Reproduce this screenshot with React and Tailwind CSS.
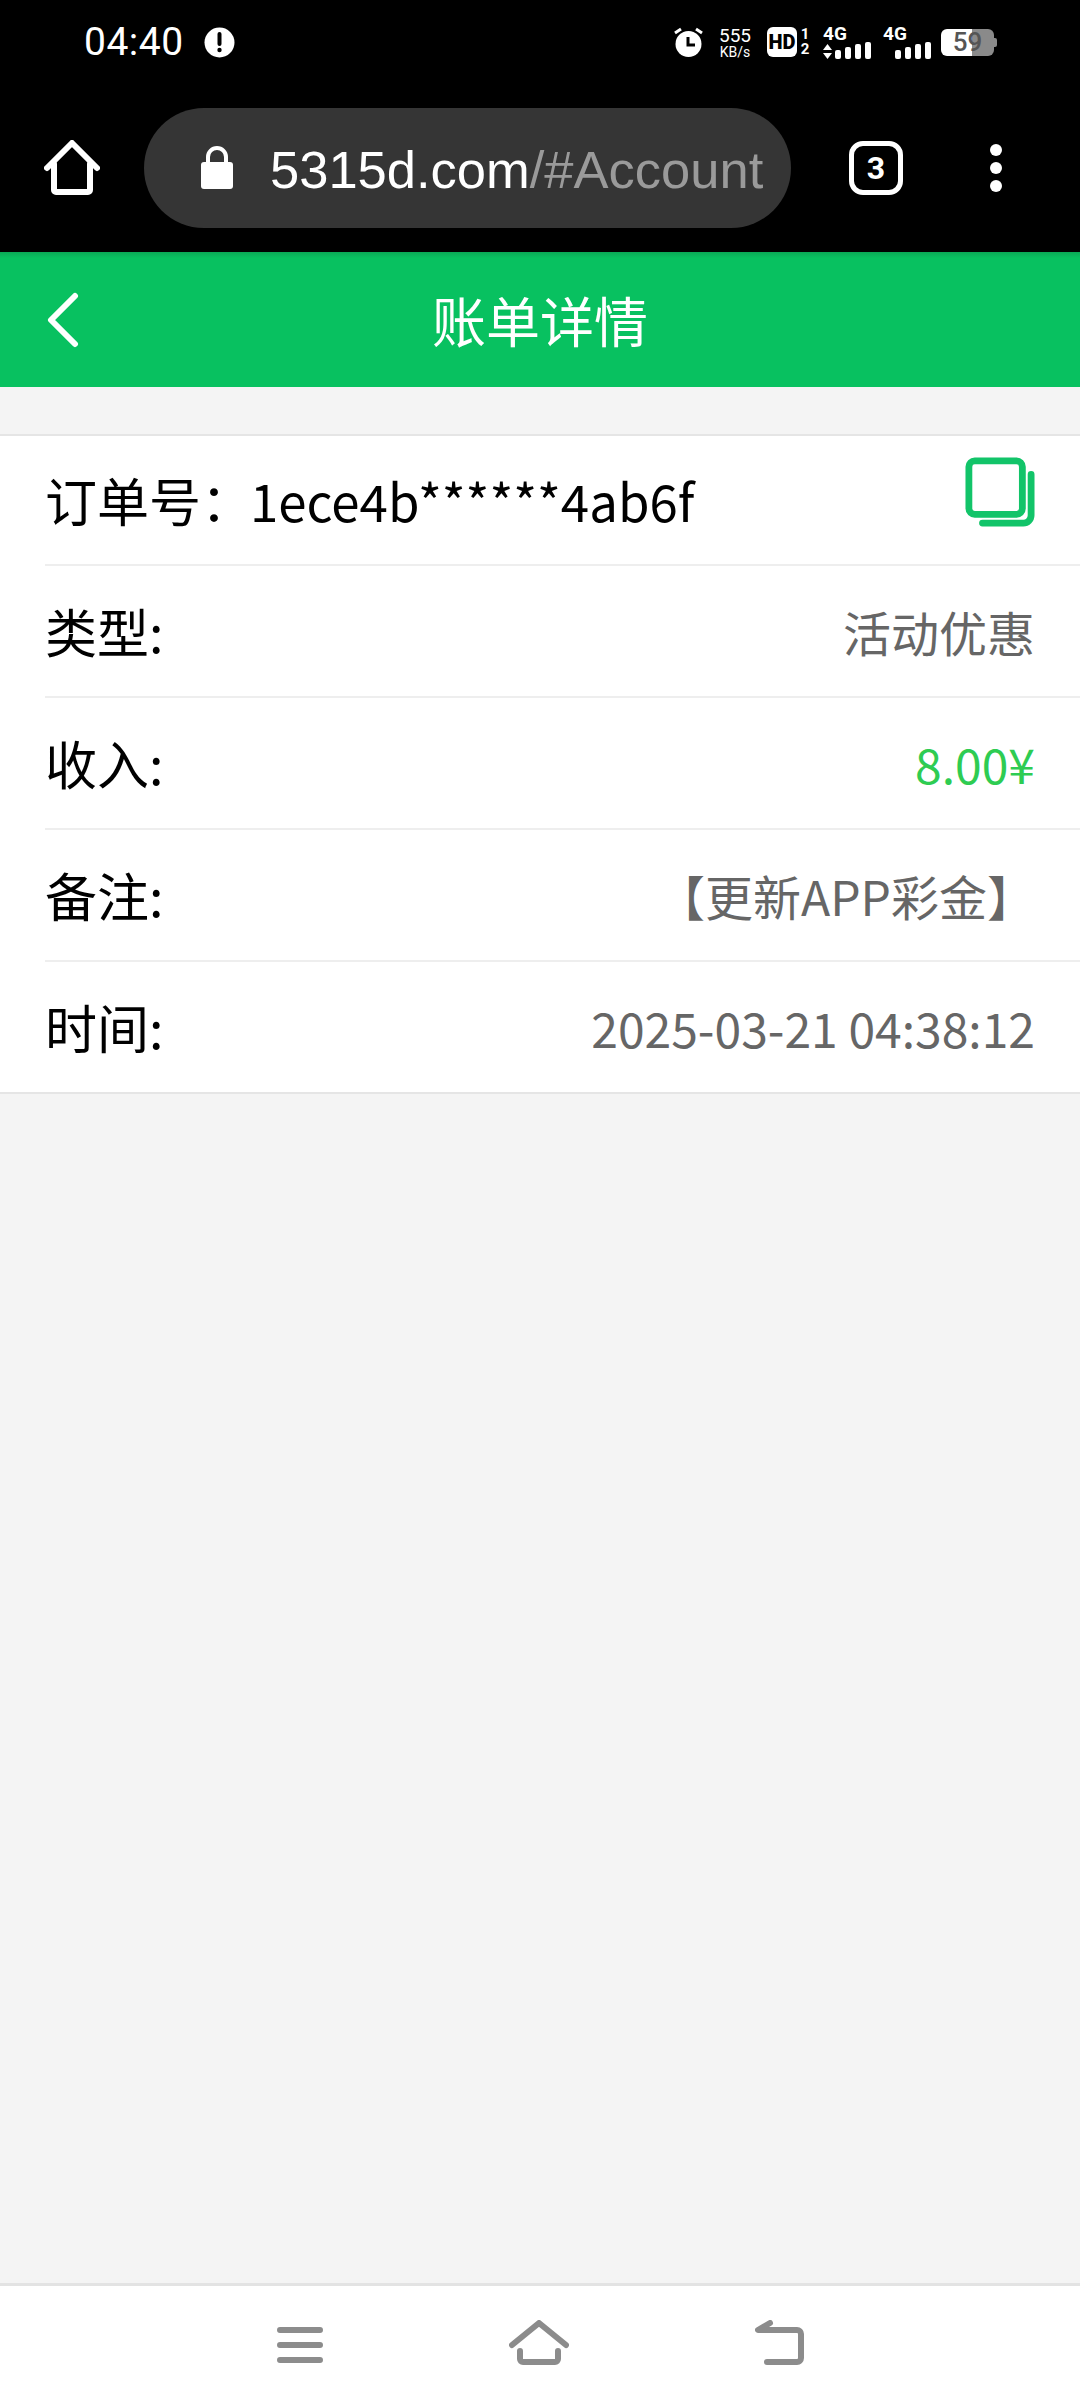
import React from 'react';

const cjk = "font-['Noto_Sans_CJK_SC','Noto_Sans',sans-serif]";

function Bars() {
  const heights = ['h-[9px]', 'h-[12px]', 'h-[15px]', 'h-[17px]'];
  return (
    <div className="flex items-end gap-[4px]">
      {heights.map((h, i) => (
        <span key={i} className={`w-[6px] rounded-[2px] bg-white ${h}`} />
      ))}
    </div>
  );
}

function Network({ arrows }) {
  return (
    <div className="flex flex-col items-start w-[48px]">
      <span className="font-['Roboto',sans-serif] text-[19px] leading-[15px] font-bold text-white">4G</span>
      <div className={`flex items-end gap-[3px] mt-[1px] ${arrows ? '' : 'pl-[12px]'}`}>
        {arrows && (
          <svg width="9" height="15" viewBox="0 0 9 15" fill="white">
            <path d="M4.5 0 9 6H0Z" />
            <path d="M0 9h9l-4.5 6Z" />
          </svg>
        )}
        <Bars />
      </div>
    </div>
  );
}

function StatusBar() {
  return (
    <div className="h-[90px] flex items-center pl-[84px] pr-[83px] pb-[6px] bg-black text-white">
      <span className="font-['Roboto',sans-serif] text-[39px] leading-none tracking-[0.5px]">04:40</span>
      <svg className="ml-[20px]" width="31" height="31" viewBox="0 0 31 31">
        <circle cx="15.5" cy="15.5" r="15" fill="white" />
        <path d="M15.5 7v10" stroke="black" strokeWidth="4" strokeLinecap="round" />
        <circle cx="15.5" cy="23" r="2.2" fill="black" />
      </svg>
      <div className="ml-auto flex items-center">
        <svg width="31" height="30" viewBox="0 0 31 30">
          <circle cx="15.5" cy="17" r="13" fill="white" />
          <path d="M15 10v8h7" fill="none" stroke="black" strokeWidth="3" />
          <path d="M2 6l6-4M29 6l-6-4" stroke="white" strokeWidth="3" />
        </svg>
        <div className="ml-[13px] w-[36px] flex flex-col items-center font-['Roboto',sans-serif] text-white">
          <span className="text-[19px] leading-[19px]">555</span>
          <span className="text-[14px] leading-[14px]">KB/s</span>
        </div>
        <div className="ml-[14px] w-[30px] h-[30px] rounded-[6px] bg-white flex items-center justify-center font-['Roboto',sans-serif] text-[20px] font-black text-black">HD</div>
        <div className="ml-[2px] w-[12px] flex flex-col items-center font-['Roboto',sans-serif] text-[15px] leading-[15px] font-bold">
          <span>1</span>
          <span>2</span>
        </div>
        <div className="ml-[12px]"><Network arrows /></div>
        <div className="ml-[12px]"><Network /></div>
        <div className="ml-[10px] flex items-center">
          <div className="relative w-[53px] h-[27px]">
            <span className="absolute inset-y-0 left-0 w-[31px] rounded-l-[6px] bg-white" />
            <span className="absolute inset-y-0 right-0 w-[22px] rounded-r-[6px] bg-[#8a8a8a]" />
            <span className="absolute inset-0 flex items-center justify-center font-['Roboto',sans-serif] text-[26px] leading-[27px] font-medium text-[#555]">59</span>
          </div>
          <span className="w-[3px] h-[9px] rounded-r-[2px] bg-[#8a8a8a]" />
        </div>
      </div>
    </div>
  );
}

function Toolbar() {
  return (
    <div className="h-[162px] pb-[24px] pt-[18px] flex items-center bg-black text-white">
      <div className="w-[144px] flex justify-center">
        <svg width="56" height="56" viewBox="0 0 56 56" fill="none" stroke="white" strokeWidth="6" strokeLinecap="round" strokeLinejoin="round">
          <path d="M3 28 28 3l25 25" />
          <path d="M10 24v26a2 2 0 0 0 2 2h32a2 2 0 0 0 2-2V24" />
        </svg>
      </div>
      <div className="w-[647px] h-[120px] rounded-full bg-[#353535] flex items-center pl-[56px]">
        <svg width="34" height="44" viewBox="0 0 34 44" fill="white">
          <path d="M8 18v-7a9 9 0 0 1 18 0v7" fill="none" stroke="white" strokeWidth="4" />
          <rect x="1" y="16" width="32" height="27" rx="3" />
        </svg>
        <span className="ml-[36px] mt-[4px] font-['Liberation_Sans',sans-serif] text-[52.5px] leading-none whitespace-nowrap">
          5315d.com<span className="text-[#9a9a9a]">/#Account</span>
        </span>
      </div>
      <div className="w-[54px] h-[54px] ml-[58px] rounded-[14px] border-[5px] border-white flex items-center justify-center font-['Roboto',sans-serif] text-[32px] font-bold leading-none">
        3
      </div>
      <div className="ml-[87px] flex flex-col gap-[6px]">
        <span className="w-[12px] h-[12px] rounded-full bg-white" />
        <span className="w-[12px] h-[12px] rounded-full bg-white" />
        <span className="w-[12px] h-[12px] rounded-full bg-white" />
      </div>
    </div>
  );
}

function Header() {
  return (
    <div className={`relative h-[135px] bg-[#08c160] flex items-center justify-center text-white ${cjk}`}>
      <div className="absolute inset-x-0 top-0 h-[6px] bg-gradient-to-b from-[#0aa955] to-[#08c160]" />
      <svg className="absolute left-[46px] top-[40px]" width="34" height="56" viewBox="0 0 34 56" fill="none" stroke="white" strokeWidth="6" strokeLinecap="round" strokeLinejoin="round">
        <path d="M29 4 5 28l24 24" />
      </svg>
      <span className="text-[54px] leading-none font-normal">账单详情</span>
    </div>
  );
}

function CopyIcon() {
  return (
    <svg width="70" height="70" viewBox="0 0 72 72" fill="none" stroke="#12c469" strokeWidth="7" strokeLinejoin="round" strokeLinecap="round">
      <rect x="4" y="4" width="55" height="55" rx="6" />
      <path d="M68 18v42a8 8 0 0 1-8 8H18" />
    </svg>
  );
}

function Row({ label, value, valueClass = 'text-[#666]' }) {
  return (
    <div className="ml-[45px] h-[132px] flex items-center justify-between pr-[45px] border-b-2 border-[#eeeeee]">
      <span className="text-[52px] leading-none text-black">{label}</span>
      <span className={`text-[48px] leading-none ${valueClass}`}>{value}</span>
    </div>
  );
}

function BottomNav() {
  return (
    <div className="h-[125px] border-t-[3px] border-[#e3e3e3] bg-white flex items-start justify-center pl-[2px] pt-[34px] gap-[186px]">
      <svg width="46" height="46" viewBox="0 0 46 46" fill="none" stroke="#8c8c8c" strokeWidth="6" strokeLinecap="round">
        <path d="M3 10h40M3 25h40M3 40h40" />
      </svg>
      <svg width="60" height="46" viewBox="0 0 60 46" fill="none" stroke="#8c8c8c" strokeWidth="6" strokeLinecap="round" strokeLinejoin="round">
        <path d="M3 25 30 3l27 22" />
        <path d="M11 31v8a3 3 0 0 0 3 3h32a3 3 0 0 0 3-3v-8" />
      </svg>
      <svg width="50" height="46" viewBox="0 0 50 46" fill="none" stroke="#8c8c8c" strokeWidth="6" strokeLinecap="round" strokeLinejoin="round">
        <path d="M15 3 3 10h39a4 4 0 0 1 4 4v24a4 4 0 0 1-4 4H12" />
      </svg>
    </div>
  );
}

export default function App() {
  return (
    <div className="h-[2408px] w-[1080px] flex flex-col bg-[#f4f4f4]">
      <StatusBar />
      <Toolbar />
      <Header />
      <div className={`mt-[47px] bg-white border-t-2 border-[#e5e5e5] ${cjk}`}>
        <div className="ml-[45px] h-[130px] flex items-center justify-between pr-[45px] border-b-2 border-[#eeeeee]">
          <span className="text-[52px] leading-none text-black whitespace-nowrap">
            订单号：<span className="ml-[-3px] text-[51px]">1ece4b******4ab6f</span>
          </span>
          <div className="mb-[16px]"><CopyIcon /></div>
        </div>
        <Row label="类型:" value="活动优惠" />
        <Row label="收入:" value="8.00¥" valueClass="text-[#2ecc52]" />
        <Row label="备注:" value="【更新APP彩金】" />
        <div className="h-[132px] flex items-center justify-between pl-[45px] pr-[45px] border-b-2 border-[#e5e5e5]">
          <span className="text-[52px] leading-none text-black">时间:</span>
          <span className="text-[48px] leading-none text-[#666]">2025-03-21 04:38:12</span>
        </div>
      </div>
      <div className="flex-1" />
      <BottomNav />
    </div>
  );
}
